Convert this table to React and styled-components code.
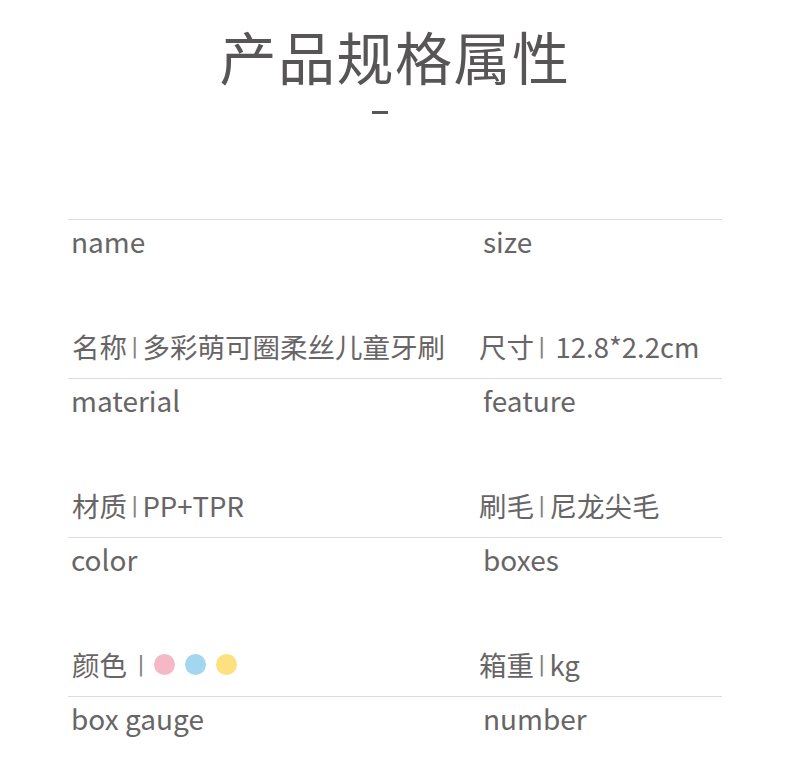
import React from "react";
import styled, { createGlobalStyle } from "styled-components";

const GlobalStyle = createGlobalStyle`
  html, body {
    margin: 0;
    padding: 0;
    background: #fff;
  }
  body {
    font-family: "Noto Sans CJK SC", "Noto Sans", sans-serif;
    color: #686566;
  }
`;

const rows = [
  {
    left: { en: "name", label: "名称", value: "多彩萌可圈柔丝儿童牙刷" },
    right: { en: "size", label: "尺寸", value: " 12.8*2.2cm" },
  },
  {
    left: { en: "material", label: "材质", value: "PP+TPR" },
    right: { en: "feature", label: "刷毛", value: "尼龙尖毛" },
  },
  {
    left: { en: "color", label: "颜色 ", dots: ["#f4b9c4", "#a3d7ef", "#fde17f"] },
    right: { en: "boxes", label: "箱重", value: "kg" },
  },
];

function Spec({ item, side }) {
  return (
    <Cell>
      <EnLabel>{item.en}</EnLabel>
      <Value $side={side}>
        {item.label}
        <Bar>|</Bar>
        {item.value}
        {item.dots && (
          <Dots>
            {item.dots.map((c) => (
              <Dot key={c} color={c} />
            ))}
          </Dots>
        )}
      </Value>
    </Cell>
  );
}

export default function App() {
  return (
    <Page>
      <GlobalStyle />
      <Header>
        <Title>产品规格属性</Title>
        <Dash />
      </Header>
      <Table>
        {rows.map((r) => (
          <Row key={r.left.en}>
            <Spec item={r.left} side="left" />
            <Spec item={r.right} side="right" />
          </Row>
        ))}
        <Row $last>
          <Cell>
            <EnLabel>box gauge</EnLabel>
          </Cell>
          <Cell>
            <EnLabel>number</EnLabel>
          </Cell>
        </Row>
      </Table>
    </Page>
  );
}

const Page = styled.div`
  width: 790px;
  height: 765px;
  overflow: hidden;
  display: flex;
  flex-direction: column;
  align-items: center;
`;

const Header = styled.div`
  flex-shrink: 0;
  display: flex;
  flex-direction: column;
  align-items: center;
  padding-top: 19px;
  height: 219px;
  box-sizing: border-box;
`;

const Title = styled.h1`
  margin: 0;
  font-size: 57px;
  font-weight: 400;
  line-height: 72px;
  letter-spacing: 1.5px;
  color: #575556;
`;

const Dash = styled.div`
  width: 16px;
  height: 3px;
  background: #575556;
  margin-top: 20px;
  margin-right: 30px;
`;

const Table = styled.div`
  flex-shrink: 0;
  width: 654px;
`;

const Row = styled.div`
  display: grid;
  grid-template-columns: 412px 1fr;
  border-top: 1px solid #dcdcdc;
  height: ${(p) => (p.$last ? "69px" : "158px")};
`;

const Cell = styled.div`
  display: flex;
  flex-direction: column;
  justify-content: space-between;
  padding: 3px 0 14px 3px;
`;

const EnLabel = styled.div`
  font-size: 28px;
  line-height: 36px;
`;

const Value = styled.div`
  display: flex;
  align-items: center;
  font-size: 27.5px;
  line-height: 36px;
  white-space: pre;
  margin-left: ${(p) => (p.$side === "right" ? "-4px" : "1px")};
`;

const Bar = styled.span`
  font-family: "DejaVu Sans", sans-serif;
  font-size: 22px;
  margin: 0 4px;
  color: #858283;
`;

const Dots = styled.span`
  display: flex;
  gap: 10px;
  margin-left: 5px;
`;

const Dot = styled.span`
  width: 21px;
  height: 21px;
  border-radius: 50%;
  background: ${(p) => p.color};
`;
